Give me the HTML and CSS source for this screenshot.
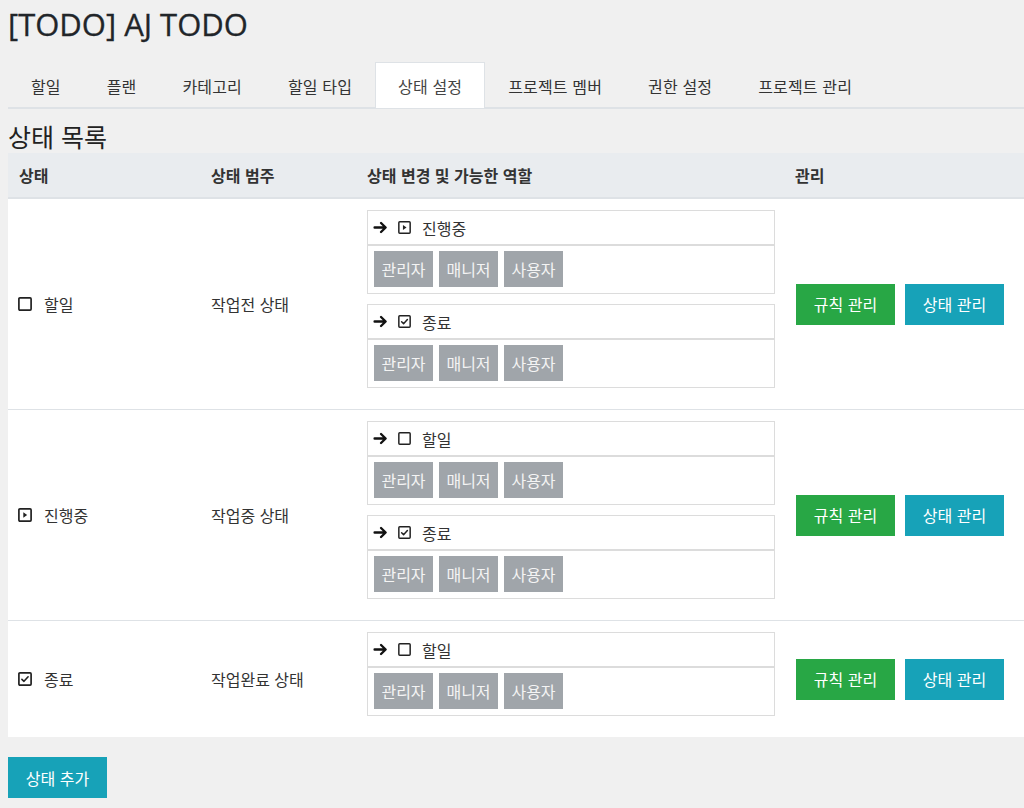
FILE: index.html
```html
<!DOCTYPE html>
<html lang="ko">
<head>
<meta charset="utf-8">
<title>[TODO] AJ TODO</title>
<link rel="stylesheet" href="styles.css">
</head>
<body>
<h1 class="title">[TODO] AJ TODO</h1>
<nav class="tabs">
  <a class="tab">할일</a>
  <a class="tab">플랜</a>
  <a class="tab">카테고리</a>
  <a class="tab">할일 타입</a>
  <a class="tab active">상태 설정</a>
  <a class="tab">프로젝트 멤버</a>
  <a class="tab">권한 설정</a>
  <a class="tab">프로젝트 관리</a>
</nav>
<h4 class="section-title">상태 목록</h4>
<table class="status-table">
  <colgroup>
    <col class="c1"><col class="c2"><col class="c3"><col class="c4">
  </colgroup>
  <thead>
    <tr><th>상태</th><th>상태 범주</th><th>상태 변경 및 가능한 역할</th><th>관리</th></tr>
  </thead>
  <tbody>
    <tr>
      <td><span class="state"><svg class="ico" viewBox="0 0 14 14"><rect x="0.9" y="0.9" width="12.2" height="12.2" rx="1" fill="none" stroke="#222" stroke-width="1.7"/></svg>할일</span></td>
      <td>작업전 상태</td>
      <td class="trans-cell">
        <div class="trans">
          <div class="trans-head"><svg class="arrow" viewBox="0 0 14 14"><path d="M1.5 7H11.5M7.5 2.8L11.8 7L7.5 11.2" fill="none" stroke="#111" stroke-width="2.2" stroke-linecap="round" stroke-linejoin="round"/></svg><svg class="ico" viewBox="0 0 14 14"><rect x="0.9" y="0.9" width="12.2" height="12.2" rx="1" fill="none" stroke="#222" stroke-width="1.6"/><path d="M5.3 4.2L9.2 7L5.3 9.8Z" fill="#222"/></svg>진행중</div>
          <div class="roles"><span class="role">관리자</span><span class="role">매니저</span><span class="role">사용자</span></div>
        </div>
        <div class="trans">
          <div class="trans-head"><svg class="arrow" viewBox="0 0 14 14"><path d="M1.5 7H11.5M7.5 2.8L11.8 7L7.5 11.2" fill="none" stroke="#111" stroke-width="2.2" stroke-linecap="round" stroke-linejoin="round"/></svg><svg class="ico" viewBox="0 0 14 14"><rect x="0.9" y="0.9" width="12.2" height="12.2" rx="1" fill="none" stroke="#222" stroke-width="1.6"/><path d="M3.9 7.3L6 9.3L10.1 4.8" fill="none" stroke="#222" stroke-width="1.6" stroke-linecap="round" stroke-linejoin="round"/></svg>종료</div>
          <div class="roles"><span class="role">관리자</span><span class="role">매니저</span><span class="role">사용자</span></div>
        </div>
      </td>
      <td><div class="actions"><button class="btn btn-green">규칙 관리</button><button class="btn btn-teal">상태 관리</button></div></td>
    </tr>
    <tr>
      <td><span class="state"><svg class="ico" viewBox="0 0 14 14"><rect x="0.9" y="0.9" width="12.2" height="12.2" rx="1" fill="none" stroke="#222" stroke-width="1.7"/><path d="M5.3 4.2L9.2 7L5.3 9.8Z" fill="#222"/></svg>진행중</span></td>
      <td>작업중 상태</td>
      <td class="trans-cell">
        <div class="trans">
          <div class="trans-head"><svg class="arrow" viewBox="0 0 14 14"><path d="M1.5 7H11.5M7.5 2.8L11.8 7L7.5 11.2" fill="none" stroke="#111" stroke-width="2.2" stroke-linecap="round" stroke-linejoin="round"/></svg><svg class="ico" viewBox="0 0 14 14"><rect x="0.9" y="0.9" width="12.2" height="12.2" rx="1" fill="none" stroke="#222" stroke-width="1.6"/></svg>할일</div>
          <div class="roles"><span class="role">관리자</span><span class="role">매니저</span><span class="role">사용자</span></div>
        </div>
        <div class="trans">
          <div class="trans-head"><svg class="arrow" viewBox="0 0 14 14"><path d="M1.5 7H11.5M7.5 2.8L11.8 7L7.5 11.2" fill="none" stroke="#111" stroke-width="2.2" stroke-linecap="round" stroke-linejoin="round"/></svg><svg class="ico" viewBox="0 0 14 14"><rect x="0.9" y="0.9" width="12.2" height="12.2" rx="1" fill="none" stroke="#222" stroke-width="1.6"/><path d="M3.9 7.3L6 9.3L10.1 4.8" fill="none" stroke="#222" stroke-width="1.6" stroke-linecap="round" stroke-linejoin="round"/></svg>종료</div>
          <div class="roles"><span class="role">관리자</span><span class="role">매니저</span><span class="role">사용자</span></div>
        </div>
      </td>
      <td><div class="actions"><button class="btn btn-green">규칙 관리</button><button class="btn btn-teal">상태 관리</button></div></td>
    </tr>
    <tr>
      <td><span class="state"><svg class="ico" viewBox="0 0 14 14"><rect x="0.9" y="0.9" width="12.2" height="12.2" rx="1" fill="none" stroke="#222" stroke-width="1.7"/><path d="M3.9 7.3L6 9.3L10.1 4.8" fill="none" stroke="#222" stroke-width="1.6" stroke-linecap="round" stroke-linejoin="round"/></svg>종료</span></td>
      <td>작업완료 상태</td>
      <td class="trans-cell">
        <div class="trans">
          <div class="trans-head"><svg class="arrow" viewBox="0 0 14 14"><path d="M1.5 7H11.5M7.5 2.8L11.8 7L7.5 11.2" fill="none" stroke="#111" stroke-width="2.2" stroke-linecap="round" stroke-linejoin="round"/></svg><svg class="ico" viewBox="0 0 14 14"><rect x="0.9" y="0.9" width="12.2" height="12.2" rx="1" fill="none" stroke="#222" stroke-width="1.6"/></svg>할일</div>
          <div class="roles"><span class="role">관리자</span><span class="role">매니저</span><span class="role">사용자</span></div>
        </div>
      </td>
      <td><div class="actions"><button class="btn btn-green">규칙 관리</button><button class="btn btn-teal">상태 관리</button></div></td>
    </tr>
  </tbody>
</table>
<div class="footer-actions"><button class="btn btn-teal">상태 추가</button></div>
</body>
</html>
```
FILE: styles.css
```css
html, body {
  margin: 0;
  padding: 0;
}
body {
  background: #f0f0f0;
  color: #212529;
  font-family: "Open Sans", "Noto Sans CJK KR", sans-serif;
  font-size: 16px;
  padding: 0 0 10px 8px;
}
.title {
  margin: 0;
  padding-top: 5px;
  font-family: "Open Sans", "Noto Sans CJK KR", sans-serif;
  font-size: 31px;
  font-weight: 400;
  line-height: 38px;
  color: #212529;
  height: 57px;
  -webkit-text-stroke: 0.3px #212529;
}
.tabs {
  display: flex;
  border-bottom: 2px solid #dee2e6;
  height: 45px;
}
.tab {
  display: flex;
  align-items: center;
  padding: 0 22px;
  border: 1px solid transparent;
  border-bottom: none;
  font-family: "Noto Sans CJK KR", sans-serif;
  font-size: 16px;
  letter-spacing: 0.15px;
  color: #333;
  margin-bottom: -2px;
  height: 46px;
  box-sizing: border-box;
}
.tab.active {
  background: #fff;
  border-color: #dee2e6;
  color: #444;
}
.section-title {
  margin: 0;
  padding-top: 10px;
  font-family: "Noto Sans CJK KR", sans-serif;
  font-size: 25px;
  font-weight: 400;
  line-height: 34px;
  color: #222;
  height: 34px;
}
.status-table {
  width: 100%;
  border-collapse: collapse;
  table-layout: fixed;
  background: #fff;
  font-family: "Noto Sans CJK KR", sans-serif;
  font-size: 16px;
  color: #333;
}
.c1 { width: 192px; }
.c2 { width: 156px; }
.c3 { width: 428px; }
.c4 { width: auto; }
.status-table th {
  background: #e9ecef;
  text-align: left;
  font-weight: 700;
  color: #333;
  height: 44px;
  padding: 0 11px;
  border-bottom: 2px solid #dee2e6;
  vertical-align: middle;
}
.status-table td {
  padding: 11px 11px;
  vertical-align: middle;
  border-top: 1px solid #dee2e6;
}
.status-table td.trans-cell {
  padding-right: 9px;
}
.status-table tbody tr:first-child td {
  border-top: none;
}
.state {
  display: flex;
  align-items: center;
}
.ico {
  width: 13px;
  height: 13px;
  margin-right: 11px;
  flex: none;
}
.state .ico {
  width: 14px;
  height: 14px;
  margin-left: -1px;
  margin-right: 12px;
}
.trans {
  margin-bottom: 10px;
}
.trans-head {
  display: flex;
  align-items: center;
  height: 33px;
  padding-left: 5px;
  border: 1px solid #dcdcdc;
}
.arrow {
  width: 15px;
  height: 15px;
  margin-right: 10px;
  flex: none;
}
.roles {
  display: flex;
  gap: 6px;
  padding: 5px 6px 0;
  box-sizing: border-box;
  height: 49px;
  border: 1px solid #dcdcdc;
}
.role {
  display: flex;
  align-items: center;
  justify-content: center;
  height: 36px;
  width: 59px;
  background: #a0a5aa;
  color: #f4f4f4;
  font-size: 16px;
}
.actions {
  display: flex;
  gap: 10px;
  padding-left: 1px;
}
.btn {
  display: inline-flex;
  align-items: center;
  justify-content: center;
  height: 41px;
  width: 99px;
  border: 1px solid transparent;
  font-family: "Noto Sans CJK KR", sans-serif;
  font-size: 16px;
  color: #fff;
  padding: 0;
  cursor: pointer;
}
.btn-green {
  background: #28a745;
  border-color: #28a745;
}
.btn-teal {
  background: #17a2b8;
  border-color: #17a2b8;
}
.footer-actions {
  padding-top: 20px;
}
```
